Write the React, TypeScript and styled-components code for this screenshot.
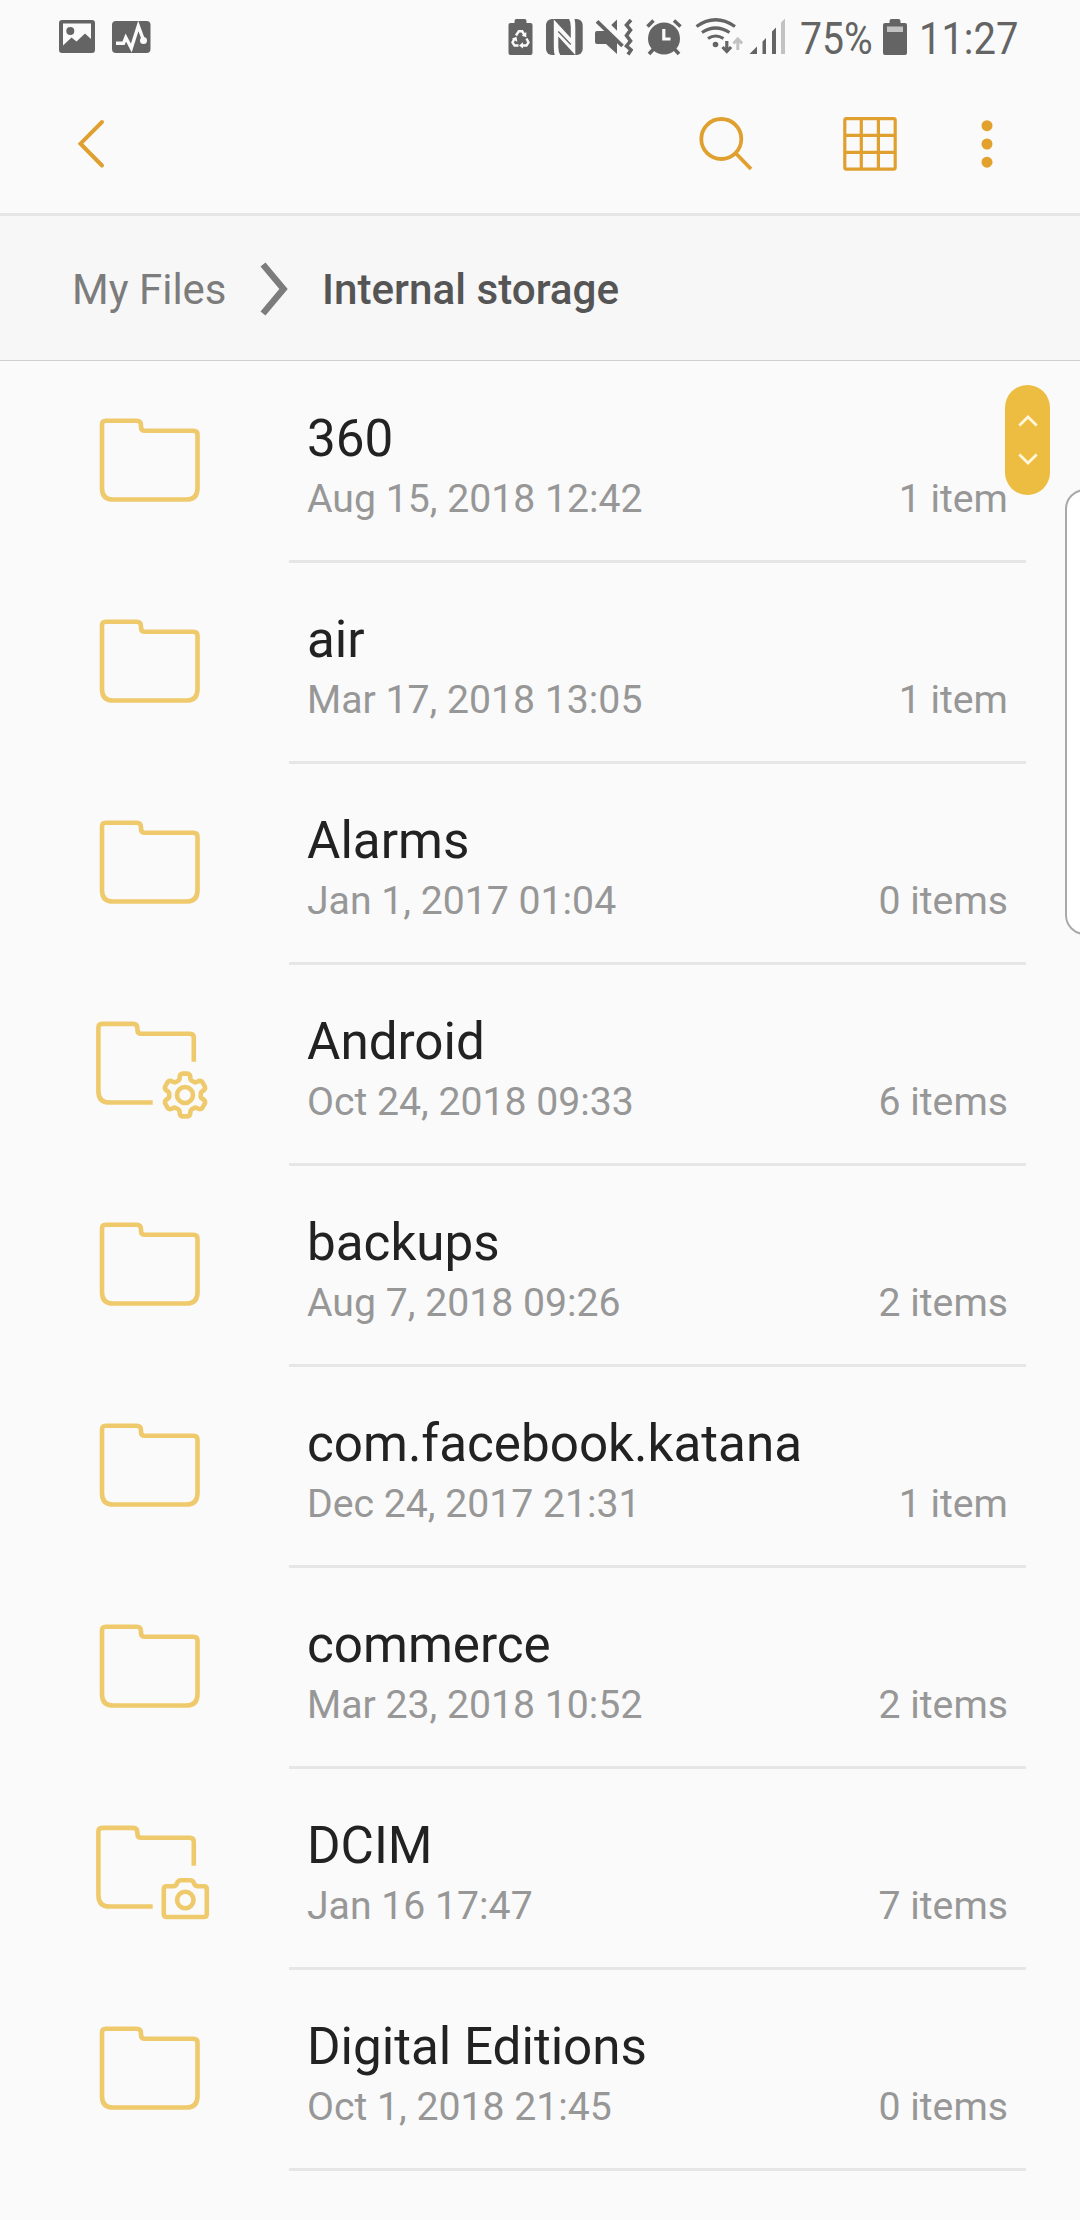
import React from "react";
import styled, { createGlobalStyle } from "styled-components";

const GlobalStyle = createGlobalStyle`
  * { box-sizing: border-box; }
  body { margin: 0; background: #fafafa; }
`;

const INK = "#646464";
const ACCENT = "#e0a030";
const FOLDER = "#efca6c";

const Screen = styled.div`
  position: relative;
  width: 1080px;
  height: 2220px;
  overflow: hidden;
  display: flex;
  flex-direction: column;
  background: #fafafa;
  font-family: Roboto, "Liberation Sans", sans-serif;
`;

const StatusBar = styled.header`
  display: flex;
  height: 74px;
  padding: 0 62px 0 59px;
  justify-content: space-between;
  align-items: flex-start;
`;

const StatusGroup = styled.div`
  display: flex;
  height: 74px;
`;

const Glyph = styled.svg<{ $gap?: number }>`
  display: block;
  flex: none;
  margin-left: ${(p) => p.$gap ?? 0}px;
`;

const StatusText = styled.span<{ $gap: number; $width: number }>`
  width: ${(p) => p.$width}px;
  margin: 12px 0 0 ${(p) => p.$gap}px;
  font-size: 45px;
  line-height: 53px;
  color: ${INK};
  white-space: nowrap;
`;

const Condensed = styled.span<{ $scale: number }>`
  display: inline-block;
  transform: scaleX(${(p) => p.$scale});
  transform-origin: left center;
`;

const Toolbar = styled.nav`
  display: flex;
  align-items: center;
  height: 142px;
  padding: 1px 87px 0 76px;
  border-bottom: 3px solid #e6e6e6;
`;

const IconButton = styled.button<{ $gap?: string }>`
  display: flex;
  padding: 0;
  border: 0;
  background: none;
  margin-left: ${(p) => p.$gap ?? "0"};
`;

const Breadcrumb = styled.div`
  display: flex;
  align-items: center;
  height: 145px;
  padding: 1px 0 0 72px;
  background: #f7f7f7;
  border-bottom: 1px solid #cfcfcf;
`;

const Crumb = styled.span<{ $current?: boolean }>`
  width: ${(p) => (p.$current ? 330 : 186)}px;
  margin-left: ${(p) => (p.$current ? 32 : 0)}px;
  padding-top: 3px;
  font-size: ${(p) => (p.$current ? 42.2 : 42)}px;
  line-height: 50px;
  font-weight: ${(p) => (p.$current ? 500 : 400)};
  color: ${(p) => (p.$current ? "#555" : "#7c7c7c")};
  white-space: nowrap;
`;

const List = styled.ul`
  margin: 0;
  padding: 1px 54px 0 90px;
  list-style: none;
`;

const Row = styled.li`
  display: flex;
  height: 201px;
`;

const IconCell = styled.div`
  width: 199px;
  padding-top: 50px;
`;

const Details = styled.div`
  flex: 1;
  display: flex;
  flex-direction: column;
  padding: 47px 18px 0;
  border-bottom: 3px solid #e6e6e6;
`;

const Name = styled.div`
  font-size: 51.2px;
  line-height: 60px;
  color: #222;
  white-space: nowrap;
`;

const Meta = styled.div`
  display: flex;
  justify-content: space-between;
  margin-top: 7px;
  font-size: 39.2px;
  line-height: 46px;
  color: #979797;
  white-space: nowrap;
`;

const ScrollHandle = styled.div`
  position: absolute;
  left: 1005px;
  top: 385px;
  width: 45px;
  height: 110px;
  border-radius: 23px;
  background: #ecbd40;
`;

const EdgePanel = styled.div`
  position: absolute;
  left: 1065px;
  top: 489px;
  width: 40px;
  height: 446px;
  border: 2px solid #a9a9a9;
  border-radius: 20px;
  background: #fff;
`;

type Kind = "plain" | "gear" | "camera";

const gearPath = (() => {
  const at = (deg: number, r: number) => {
    const a = ((deg - 90) * Math.PI) / 180;
    return `${(185 + r * Math.cos(a)).toFixed(2)} ${(130 + r * Math.sin(a)).toFixed(2)}`;
  };
  let d = `M${at(-8, 21.6)}`;
  for (let k = 0; k < 360; k += 60) {
    d += `L${at(k + 8, 21.6)}Q${at(k + 15, 21.3)} ${at(k + 17.5, 17.8)}Q${at(k + 20, 15.6)} ${at(k + 30, 15.8)}`;
    d += `Q${at(k + 40, 15.6)} ${at(k + 42.5, 17.8)}Q${at(k + 45, 21.3)} ${at(k + 52, 21.6)}`;
  }
  return d + "Z";
})();

function FolderIcon({ kind }: { kind: Kind }) {
  return (
    <Glyph width="130" height="110" viewBox="90 50 130 110" fill="none" stroke={FOLDER} strokeWidth="4.6">
      {kind === "plain" ? (
        <path d="M102 62.5q0-3.700 3.700-3.700h31q4.300 0 4.300 4.300v1.600q0 4 4 4h48.500q4 0 4 4v53.500q0 11.300-11.300 11.300h-72.900q-11.300 0-11.300-11.300z" />
      ) : (
        <path d="M193.800 96.800v-24q0-4-4-4h-48.400q-4 0-4-4v-1.600q0-4.300-4.300-4.300h-31q-3.700 0-3.700 3.700v63.600q0 11.300 11.300 11.300h43" />
      )}
      {kind === "gear" && (
        <>
          <path d={gearPath} strokeLinejoin="round" />
          <circle cx="185" cy="130" r="8" />
        </>
      )}
      {kind === "camera" && (
        <>
          <path d="M166.800 117.300h6.200q3 0 4-3t4.200-3h8.600q3.200 0 4.200 3t4 3h5.800q3 0 3 3v24.700q0 3-3 3h-37q-3 0-3-3v-24.700q0-3 3-3z" />
          <circle cx="185.300" cy="131" r="8.200" />
        </>
      )}
    </Glyph>
  );
}

const files: { name: string; date: string; count: string; kind: Kind }[] = [
  { name: "360", date: "Aug 15, 2018 12:42", count: "1 item", kind: "plain" },
  { name: "air", date: "Mar 17, 2018 13:05", count: "1 item", kind: "plain" },
  { name: "Alarms", date: "Jan 1, 2017 01:04", count: "0 items", kind: "plain" },
  { name: "Android", date: "Oct 24, 2018 09:33", count: "6 items", kind: "gear" },
  { name: "backups", date: "Aug 7, 2018 09:26", count: "2 items", kind: "plain" },
  { name: "com.facebook.katana", date: "Dec 24, 2017 21:31", count: "1 item", kind: "plain" },
  { name: "commerce", date: "Mar 23, 2018 10:52", count: "2 items", kind: "plain" },
  { name: "DCIM", date: "Jan 16 17:47", count: "7 items", kind: "camera" },
  { name: "Digital Editions", date: "Oct 1, 2018 21:45", count: "0 items", kind: "plain" },
];

function Status() {
  return (
    <StatusBar>
      <StatusGroup>
        <Glyph width="36" height="60" viewBox="59 0 36 60">
          <rect x="59" y="20" width="36" height="33" rx="3" fill={INK} />
          <path d="M63 23.500H91V39L85 33.500L76.500 41.500L71.500 37.500L63 45.500z" fill="#fafafa" />
          <circle cx="70.300" cy="31" r="4" fill={INK} />
        </Glyph>
        <Glyph $gap={17} width="39" height="60" viewBox="112 0 39 60">
          <rect x="112" y="21" width="38.500" height="32" rx="4" fill={INK} />
          <path d="M116 43.300H123.500L125.800 37.500L131.300 48L138.300 26L143.500 40" fill="none" stroke="#fafafa" strokeWidth="3.400" />
          <circle cx="143.500" cy="40.500" r="3.500" fill="#fafafa" />
        </Glyph>
      </StatusGroup>
      <StatusGroup>
        <Glyph width="25" height="60" viewBox="507.500 0 25 60">
          <path d="M508 25q0-2 2-2h4v-2q0-2 2-2h8q2 0 2 2v2h4q2 0 2 2v28q0 2-2 2h-20q-2 0-2-2z" fill={INK} />
          <g fill="none" stroke="#fafafa" strokeWidth="2.400">
            <path d="M515.500 35.500L518.300 31.300H521.700L524.300 35.500" />
            <path d="M526 38.500L528 42.500L526 45.500H521.500" />
            <path d="M518 45.500H514L512 42.500L514 38.500" />
          </g>
          <path d="M525.800 32v5.200l-4.600-1.500zM522.500 42.200v6.400l-4-3.200zM511.300 38.700l4.700-2 .8 5z" fill="#fafafa" />
        </Glyph>
        <Glyph $gap={13.5} width="37" height="60" viewBox="546 0 37 60">
          <rect x="546" y="19" width="36.700" height="36" rx="6" fill={INK} />
          <path
            d="M553.800 19.500L570.800 38V27Q570.800 21.500 568.800 18.500H574.500Q575.300 22 575.300 28V55L558.300 36.500V47Q558.300 52 560.500 55.500H554.800Q553.800 52 553.800 47z"
            fill="#fafafa"
          />
          <path d="M558.300 31.500L570.800 44.500" stroke={INK} strokeWidth="1.300" />
        </Glyph>
        <Glyph $gap={12} width="38" height="60" viewBox="595 0 38 60">
          <path d="M595 33q0-2 2-2h8l12-11.500V54L606 44h-9q-2 0-2-2z" fill={INK} />
          <path d="M598 17.500L626 45" stroke="#fafafa" strokeWidth="8" />
          <path d="M597 21.300L622.500 46" stroke={INK} strokeWidth="3.800" />
          <path d="M631 20l-4.500 5 4 5-4 5.500 4 5.500-4 5 4.500 4-3 4.500" fill="none" stroke={INK} strokeWidth="3.600" />
        </Glyph>
        <Glyph $gap={12.5} width="36" height="60" viewBox="645.500 0 36 60">
          <circle cx="663.500" cy="38.500" r="16" fill={INK} />
          <g fill="none" stroke={INK} strokeWidth="3.600">
            <path d="M647 26.500L653 20.500M680 26.500L673.500 20.500M654 48l-5.500 6M673 48l5.500 6" />
          </g>
          <path d="M663.300 29V39H670" fill="none" stroke="#fafafa" strokeWidth="3.200" />
        </Glyph>
        <Glyph $gap={13.5} width="48" height="60" viewBox="695 0 48 60">
          <g fill="none" stroke={INK} strokeWidth="3.200">
            <path d="M696.500 26.500Q715.500 13 735 26.500" />
            <path d="M702 32.500Q715.500 23.500 729.500 32.500" />
            <path d="M708 38.500Q715.500 33.500 723.500 38.500" />
            <path d="M726.800 41V51M722.500 47l4.300 4.500 4.300-4.500" />
          </g>
          <circle cx="715.500" cy="44.500" r="2.800" fill={INK} />
          <path d="M737.800 50V39.500M733.500 43.500l4.300-4.500 4.300 4.500" fill="none" stroke="#c2c2c2" strokeWidth="3" />
        </Glyph>
        <Glyph $gap={6} width="37" height="60" viewBox="749 0 37 60">
          <path d="M749.500 54L757 46.500V54zM762.500 54V41.500L766 38V54zM772 54V31.500L776 27.500V54z" fill={INK} />
          <path d="M781 54V22.500L785 18.500V54z" fill="#c2c2c2" />
        </Glyph>
        <StatusText $gap={13.5} $width={83.5}>
          <Condensed $scale={0.87}>75%</Condensed>
        </StatusText>
        <Glyph width="24" height="60" viewBox="883 0 24 60">
          <path d="M883 25q0-2 2-2h4.500v-2q0-2 2-2h7q2 0 2 2v2h4.500q2 0 2 2v28q0 2-2 2h-20q-2 0-2-2z" fill={INK} />
          <path d="M887 26.500h16v5.500h-16z" fill="#c2c2c2" />
        </Glyph>
        <StatusText $gap={12} $width={99}>
          <Condensed $scale={0.887}>11:27</Condensed>
        </StatusText>
      </StatusGroup>
    </StatusBar>
  );
}

export default function App() {
  return (
    <Screen>
      <GlobalStyle />
      <Status />
      <Toolbar>
        <IconButton aria-label="Back">
          <Glyph width="30" height="60" viewBox="76 114 30 60" fill="none" stroke={ACCENT} strokeWidth="4">
            <path d="M102 122L80.500 143.700L102 165.500" strokeLinecap="round" />
          </Glyph>
        </IconButton>
        <IconButton aria-label="Search" $gap="auto">
          <Glyph width="58" height="60" viewBox="697 114 58 60" fill="none" stroke={ACCENT} strokeWidth="3.800">
            <circle cx="721.300" cy="139" r="20" />
            <path d="M735.500 153L751 169" />
          </Glyph>
        </IconButton>
        <IconButton aria-label="Grid view" $gap="84px">
          <Glyph width="62" height="60" viewBox="839 114 62 60" fill="none" stroke={ACCENT} strokeWidth="3.200">
            <rect x="844.800" y="118.700" width="50.400" height="50.400" rx="1.500" />
            <path d="M861.300 118V169M878.400 118V169M844 135.300H895M844 152.300H895" />
          </Glyph>
        </IconButton>
        <IconButton aria-label="More options" $gap="80px">
          <Glyph width="12" height="60" viewBox="981 114 12 60" fill="#e2a02c">
            <circle cx="987" cy="125.700" r="5.500" />
            <circle cx="987" cy="144" r="5.500" />
            <circle cx="987" cy="162.200" r="5.500" />
          </Glyph>
        </IconButton>
      </Toolbar>
      <Breadcrumb>
        <Crumb>My Files</Crumb>
        <Glyph width="32" height="60" viewBox="258 258 32 60" fill="none" stroke="#7c7c7c" strokeWidth="6.500">
          <path d="M263 263.500L283.500 288L263 312.500" />
        </Glyph>
        <Crumb $current>Internal storage</Crumb>
      </Breadcrumb>
      <List>
        {files.map((f) => (
          <Row key={f.name}>
            <IconCell>
              <FolderIcon kind={f.kind} />
            </IconCell>
            <Details>
              <Name>{f.name}</Name>
              <Meta>
                <span>{f.date}</span>
                <span>{f.count}</span>
              </Meta>
            </Details>
          </Row>
        ))}
      </List>
      <ScrollHandle>
        <Glyph width="45" height="110" viewBox="1005 385 45 110" fill="none" stroke="#fff8dc" strokeWidth="2.800">
          <path d="M1019.300 425.500L1028 417L1036.700 425.500M1019.300 454.500L1028 463L1036.700 454.500" />
        </Glyph>
      </ScrollHandle>
      <EdgePanel />
    </Screen>
  );
}
